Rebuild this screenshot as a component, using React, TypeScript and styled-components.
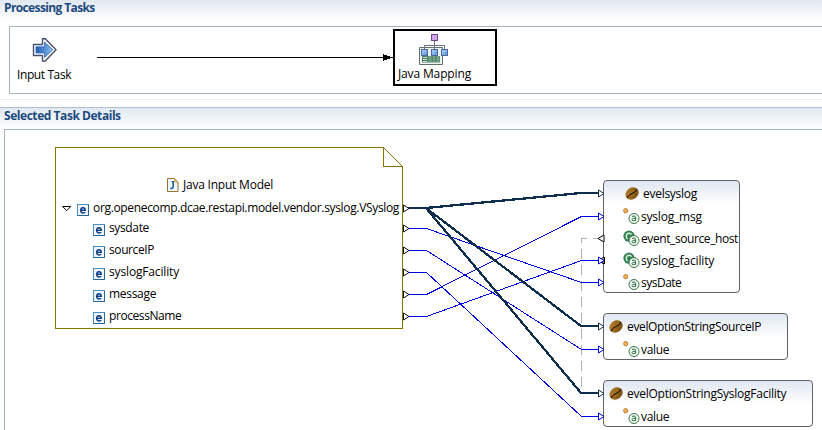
import React from "react";
import styled, { createGlobalStyle } from "styled-components";

const GlobalStyle = createGlobalStyle`
  * { box-sizing: border-box; }
  html, body { margin: 0; background: #fff; overflow: hidden; }
  body { font: 12px/16px "Open Sans", "Noto Sans", sans-serif; color: #000; }
  svg { display: block; flex: none; }
`;

const Page = styled.div`
  width: 822px;
  height: 430px;
  display: flex;
  flex-direction: column;
  overflow: hidden;
`;

const Section = styled.section<{ $grow?: boolean }>`
  display: flex;
  flex-direction: column;
  flex: ${(p) => (p.$grow ? "1" : "none")};
  min-height: 0;
`;

const SectionTitle = styled.h2<{ $height: number; $track: number }>`
  margin: 0;
  height: ${(p) => p.$height}px;
  padding-left: 4px;
  font-size: 12px;
  line-height: 16px;
  font-weight: 700;
  letter-spacing: ${(p) => p.$track}px;
  color: #1c4a7e;
  background: linear-gradient(#e1e8f1, #fff 21px);
`;

const Separator = styled.div`
  height: 14px;
  padding-top: 5px;
  &::before {
    content: "";
    display: block;
    height: 7px;
    border-top: 1px solid #ededef;
    border-bottom: 1px solid #b3bfce;
  }
`;

const TaskPanel = styled.div`
  position: relative;
  height: 68px;
  margin-left: 9px;
  border: 1px solid #a7b2bf;
  border-right: 0;
  display: flex;
  align-items: flex-start;
`;

const Task = styled.div<{ $selected?: boolean }>`
  display: flex;
  flex-direction: column;
  width: ${(p) => (p.$selected ? 104 : 87)}px;
  height: ${(p) => (p.$selected ? 57 : 60)}px;
  margin-top: 2px;
  border: ${(p) => (p.$selected ? "2px solid #000" : "0")};
  padding: ${(p) => (p.$selected ? "3px 0 0 3px" : "8px 0 0 7px")};
`;

const TaskIcon = styled.div<{ $left: number; $height: number }>`
  height: ${(p) => p.$height}px;
  padding-left: ${(p) => p.$left}px;
`;

const Canvas = styled.div`
  position: relative;
  flex: 1;
  margin-left: 4px;
  border: solid #a7b2bf;
  border-width: 1px 0 0 1px;
  overflow: hidden;
`;

const Wires = styled.svg`
  position: absolute;
  left: 0;
  top: 0;
`;

const Label = styled.span<{ $track: number; $drop?: number }>`
  white-space: nowrap;
  letter-spacing: ${(p) => p.$track}px;
  padding-top: ${(p) => p.$drop ?? 0}px;
`;

const Model = styled.div`
  position: absolute;
  left: 50px;
  top: 17px;
  width: 348px;
  height: 182px;
  padding-top: 28px;
`;

const ModelTitle = styled.div`
  display: flex;
  align-items: center;
  gap: 4px;
  height: 20px;
  padding-left: 112px;
`;

const ModelRow = styled.div<{ $level: number }>`
  display: flex;
  align-items: center;
  gap: 4px;
  height: ${(p) => (p.$level ? 22 : 24)}px;
  margin-top: ${(p) => (p.$level ? 0 : 1)}px;
  margin-bottom: ${(p) => (p.$level ? 0 : -3)}px;
  padding-left: ${(p) => (p.$level ? 38 : 7)}px;
`;

const IconSlot = styled.span`
  padding-top: 4px;
`;

const ExpandSlot = styled.span`
  width: 11px;
  padding-top: 1px;
`;

const Bean = styled.div<{ $left: number; $top: number; $width: number; $height: number }>`
  position: absolute;
  left: ${(p) => p.$left - 5}px;
  top: ${(p) => p.$top - 130}px;
  width: ${(p) => p.$width}px;
  height: ${(p) => p.$height}px;
  border: 1px solid #606164;
  border-radius: 4px;
  background: linear-gradient(#e0e7f1, #fff 23px);
`;

const BeanTitle = styled.div<{ $indent: number }>`
  display: flex;
  align-items: center;
  gap: 4px;
  height: 24px;
  padding-left: ${(p) => p.$indent}px;
`;

const BeanRow = styled.div`
  display: flex;
  align-items: center;
  gap: 1px;
  height: 22px;
  padding-left: 19px;
`;

const InputIcon = () => (
  <svg width="26" height="26" viewBox="0 0 26 26">
    <defs>
      <linearGradient id="arrow" x1="0" x2="1">
        <stop offset="0" stopColor="#1f5fb4" />
        <stop offset="1" stopColor="#8dbcf0" />
      </linearGradient>
    </defs>
    <path d="M1.5 7.5H10.5V1.8L13 1.5L24 12.8L13 24.2L10.5 24V18.5H1.5Z" fill="#fff" stroke="#46506f" strokeWidth="1.4" strokeLinejoin="round" />
    <path d="M4 9.8H12.5V5L20.8 12.8L12.5 20.6V16H4Z" fill="url(#arrow)" stroke="#2d68b7" strokeWidth=".8" />
  </svg>
);

const MappingIcon = () => (
  <svg width="30" height="32" viewBox="0 0 30 32">
    <defs>
      <linearGradient id="node" x2="1" y2="1">
        <stop offset="0" stopColor="#b7dbff" />
        <stop offset="1" stopColor="#5889cf" />
      </linearGradient>
    </defs>
    <path d="M.5 13.5H23.5V30.5H.5Z" fill="#eef3ef" stroke="#5e7469" />
    <path d="M3 22H21V28.5H3Z" fill="#5b7e6e" />
    <path d="M4 23.5H8M4 25.5H8M4 27.5H8" stroke="#b9e1bd" />
    <path d="M9.5 23H12.5M14 23H16M17.5 23H20.5M9.5 25.3H12.5M14 25.3H16M17.5 25.3H20.5M9.5 27.6H12.5M14 27.6H16M17.5 27.6H20.5" stroke="#7bb58a" strokeWidth="1.5" />
    <path d="M15.5 7V16M5.5 16V11.5H25.5V16" fill="none" stroke="#6b7180" />
    <rect x="12.5" y=".5" width="6" height="6" fill="#d2a4ee" stroke="#70478f" />
    {[2.5, 12.5, 22.5].map((x) => (
      <rect key={x} x={x} y="15.5" width="6" height="6" fill="url(#node)" stroke="#49699c" />
    ))}
  </svg>
);

const JavaFileIcon = () => (
  <svg width="12" height="14" viewBox="0 0 12 14">
    <path d="M.5 .5H7.5L11 4V13.5H.5Z" fill="#eef5fe" stroke="#96742c" />
    <path d="M7.5 .5V4H11Z" fill="#e7bd62" stroke="#b88b35" strokeWidth=".6" />
    <path d="M4.6 3.7H7M6.2 3.2V8.6Q6.2 10.4 4.8 10.4H3.2" fill="none" stroke="#27639f" strokeWidth="1.6" />
  </svg>
);

const ElementIcon = () => (
  <svg width="12" height="12" viewBox="0 0 12 12">
    <rect x=".5" y=".5" width="11" height="11" fill="#edf6fd" stroke="#4b8fc0" />
    <path d="M.5 11.5H11.5V1" fill="none" stroke="#28659a" />
    <path d="M3.8 6.3H8.2Q8.2 3.7 6 3.7Q3.7 3.7 3.7 6.3Q3.7 8.9 6.2 8.9Q7.5 8.9 8.2 8.3" fill="none" stroke="#173f83" strokeWidth="1.5" />
  </svg>
);

const ExpandIcon = () => (
  <svg width="10" height="6" viewBox="0 0 10 6">
    <path d="M.7 .5H8.7L4.7 4.7Z" fill="#fff" stroke="#000" />
  </svg>
);

const BeanIcon = () => (
  <svg width="14" height="13" viewBox="0 0 14 13">
    <defs>
      <linearGradient id="bean" x2="1" y2="1">
        <stop offset="0" stopColor="#b98838" />
        <stop offset=".5" stopColor="#95651a" />
        <stop offset="1" stopColor="#6b420b" />
      </linearGradient>
    </defs>
    <ellipse cx="7" cy="6.5" rx="7" ry="5.8" transform="rotate(-35 7 6.5)" fill="url(#bean)" />
    <path d="M2.2 11Q3.4 7.6 7 6.4Q10.6 5 11.8 2" fill="none" stroke="#2e1700" strokeWidth="1.2" />
    <path d="M2.2 9.6Q3.7 6.6 6.8 5.4Q9.5 4.2 10.4 2.2" fill="none" stroke="#c99b50" strokeWidth=".5" />
  </svg>
);

const AttributeIcon = ({ constant }: { constant?: boolean }) => (
  <svg width="17" height="16" viewBox="0 0 17 16">
    {constant ? (
      <>
        <circle cx="6" cy="6.2" r="5.6" fill="#388354" />
        <path d="M8.6 4.6Q7.7 3.2 6.2 3.2Q3.3 3.2 3.3 6.3Q3.3 8.2 4.5 9" fill="none" stroke="#d9efdd" strokeWidth="1.4" />
      </>
    ) : (
      <circle cx="2.7" cy="2.7" r="2.1" fill="#f4b55b" stroke="#b86f16" strokeWidth=".9" />
    )}
    <circle cx="11" cy="10.5" r="5" fill="#f4fbf4" stroke="#347444" strokeWidth="1" />
    <path d="M9 8.4Q12.6 7 12.6 9.4V12.8M12.6 10.2Q9 9.8 9 11.6Q9 13.1 10.8 12.7Q12 12.5 12.6 11.3" fill="none" stroke="#28693c" strokeWidth="1" />
  </svg>
);

const NAVY = "#102f4f";
const BLUE = "#0000e8";
const DOC = "#8f7300";

const Port = ({ x, y, color, back }: { x: number; y: number; color: string; back?: boolean }) => (
  <path
    d={back ? `M${x + 6} ${y - 3}V${y + 4}L${x} ${y + 0.5}Z` : `M${x + 0.5} ${y - 3}V${y + 4}L${x + 6} ${y + 0.5}Z`}
    fill="#fff"
    stroke={color}
  />
);

const thick = [193, 326, 393];
const thin: [number, number][] = [
  [228, 282],
  [250, 349],
  [272, 416],
  [294, 216],
  [316, 260],
];

const DocumentFrame = () => (
  <g fill="#fff" stroke={DOC} shapeRendering="crispEdges">
    <path d="M55.5 147.5H383.5L402.5 166.5V328.5H55.5Z" />
    <path d="M383.5 147.5V166.5H402.5" fill="none" />
  </g>
);

const fields: [string, number][] = [
  ["sysdate", -0.36],
  ["sourceIP", -0.4],
  ["syslogFacility", -0.15],
  ["message", -0.3],
  ["processName", -0.42],
];

interface BeanData {
  name: string;
  track: number;
  indent: number;
  box: [number, number, number, number];
  rows: { name: string; track: number; constant?: boolean }[];
}

const beans: BeanData[] = [
  {
    name: "evelsyslog",
    track: -0.28,
    indent: 21,
    box: [603, 180, 137, 113],
    rows: [
      { name: "syslog_msg", track: -0.2 },
      { name: "event_source_host", track: -0.41, constant: true },
      { name: "syslog_facility", track: -0.14, constant: true },
      { name: "sysDate", track: -0.5 },
    ],
  },
  {
    name: "evelOptionStringSourceIP",
    track: -0.36,
    indent: 5,
    box: [603, 313, 185, 47],
    rows: [{ name: "value", track: -0.3 }],
  },
  {
    name: "evelOptionStringSyslogFacility",
    track: -0.25,
    indent: 5,
    box: [603, 380, 210, 47],
    rows: [{ name: "value", track: -0.3 }],
  },
];

export default function App() {
  return (
    <Page>
      <GlobalStyle />
      <Section>
        <SectionTitle $height={26} $track={-0.62}>
          Processing Tasks
        </SectionTitle>
        <TaskPanel>
          <Task>
            <TaskIcon $left={15} $height={29}>
              <InputIcon />
            </TaskIcon>
            <Label $track={-0.4} $drop={1}>Input Task</Label>
          </Task>
          <svg width="296" height="66" viewBox="97 27 296 66" shapeRendering="crispEdges">
            <path d="M97 57.5H390" stroke="#000" />
            <path d="M383 54V61L393 57.5Z" />
          </svg>
          <Task $selected>
            <TaskIcon $left={21} $height={31}>
              <MappingIcon />
            </TaskIcon>
            <Label $track={-0.14} $drop={1}>Java Mapping</Label>
          </Task>
        </TaskPanel>
      </Section>
      <Separator />
      <Section $grow>
        <SectionTitle $height={21} $track={-0.45}>
          Selected Task Details
        </SectionTitle>
        <Canvas>
          <Wires width="817" height="300" viewBox="5 130 817 300">
            <DocumentFrame />
          </Wires>
          <Model>
            <ModelTitle>
              <JavaFileIcon />
              <Label $track={-0.22}>Java Input Model</Label>
            </ModelTitle>
            <ModelRow $level={0}>
              <ExpandSlot>
                <ExpandIcon />
              </ExpandSlot>
              <IconSlot>
                <ElementIcon />
              </IconSlot>
              <Label $track={-0.335}>org.openecomp.dcae.restapi.model.vendor.syslog.VSyslog</Label>
            </ModelRow>
            {fields.map(([name, track]) => (
              <ModelRow key={name} $level={1}>
                <IconSlot>
                  <ElementIcon />
                </IconSlot>
                <Label $track={track}>{name}</Label>
              </ModelRow>
            ))}
          </Model>
          {beans.map((b) => (
            <Bean key={b.name} $left={b.box[0]} $top={b.box[1]} $width={b.box[2]} $height={b.box[3]}>
              <BeanTitle $indent={b.indent}>
                <BeanIcon />
                <Label $track={b.track} $drop={1}>{b.name}</Label>
              </BeanTitle>
              {b.rows.map((r) => (
                <BeanRow key={r.name}>
                  <AttributeIcon constant={r.constant} />
                  <Label $track={r.track} $drop={1}>{r.name}</Label>
                </BeanRow>
              ))}
            </Bean>
          ))}
          <Wires width="817" height="300" viewBox="5 130 817 300">
            <g fill="none" shapeRendering="crispEdges">
              <path d="M603 238.5H581.5V393" stroke="#a9b2bb" strokeDasharray="10 6" />
              {thin.map(([a, b]) => (
                <path key={a} d={`M408 ${a + 0.5}H426.5L581.5 ${b + 0.5}H598`} stroke={BLUE} />
              ))}
              {thick.map((y) => (
                <path key={y} d={`M408 208H426L581 ${y}H598`} stroke={NAVY} strokeWidth="2.3" />
              ))}
            </g>
            {[208, 228, 250, 272, 294, 316].map((y) => (
              <Port key={y} x={403} y={y} color="#111" />
            ))}
            <Port x={598} y={238} color="#000" back />
            <Port x={598} y={260} color="#000" back />
            {thick.map((y) => (
              <Port key={y} x={598} y={y} color={NAVY} />
            ))}
            {thin.map(([, y]) => (
              <Port key={y} x={598} y={y} color={BLUE} />
            ))}
            <path d="M604.5 257V264M602 262.5L604 264" stroke="#000" />
          </Wires>
        </Canvas>
      </Section>
    </Page>
  );
}
